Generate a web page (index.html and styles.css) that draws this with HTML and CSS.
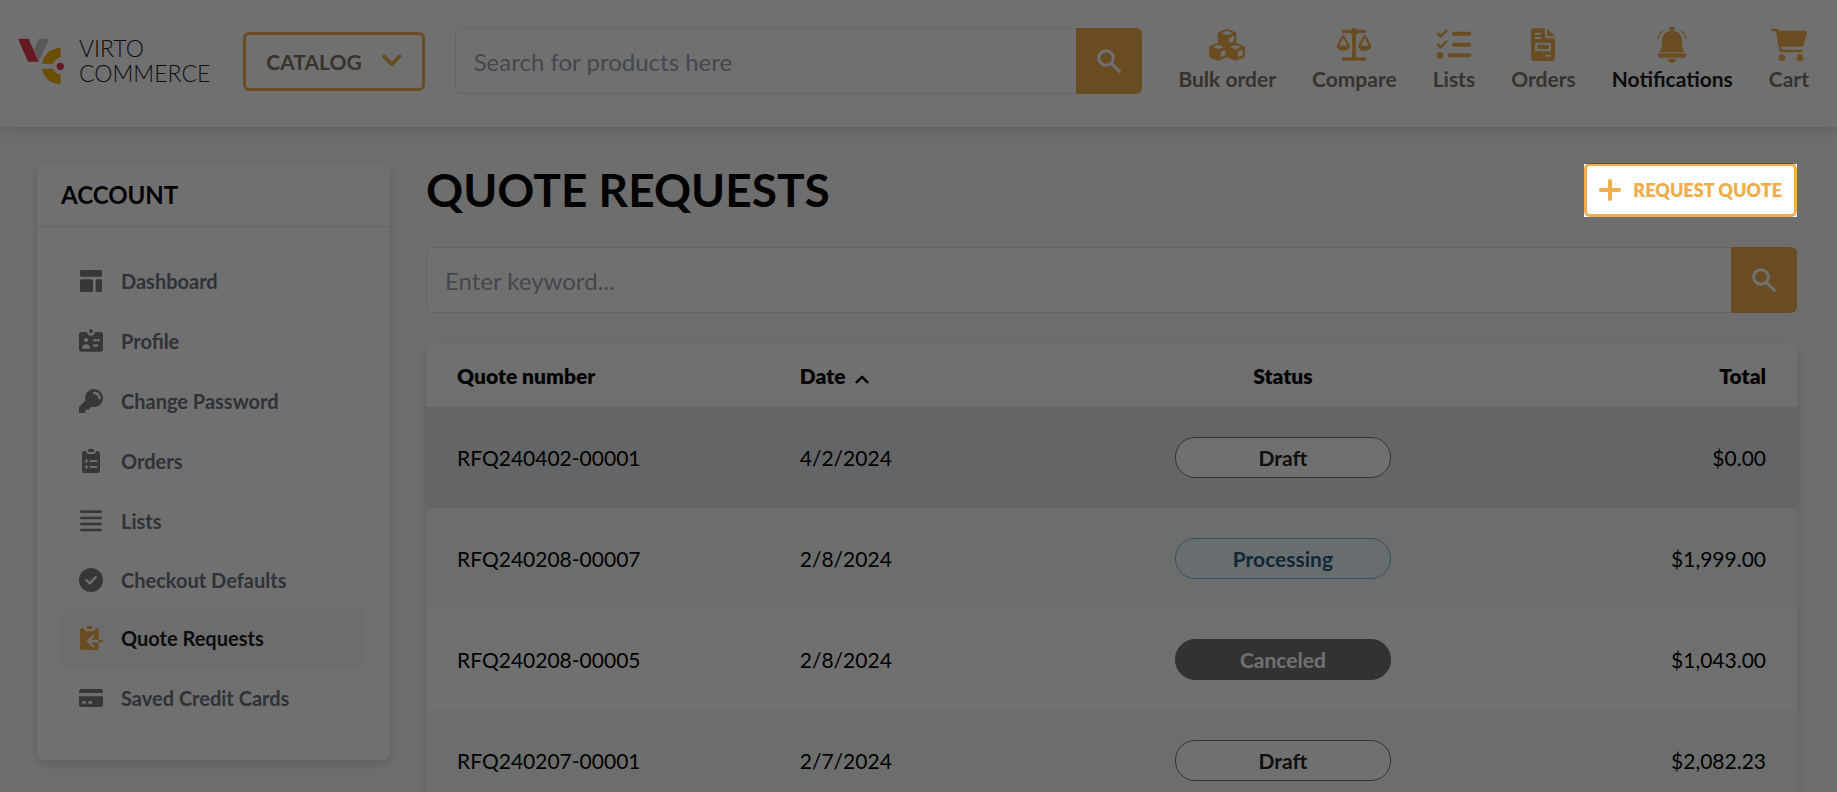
FILE: index.html
```html
<!DOCTYPE html>
<html lang="en">
<head>
<meta charset="utf-8">
<title>Quote requests</title>
<link rel="stylesheet" href="styles.css">
</head>
<body>
<header class="header">
  <a class="logo" href="#">
    <svg class="logo-mark" viewBox="54 112 138 141" aria-hidden="true">
      <path fill="#c9c9c9" d="M117 114h30l-30 67-15-34z"/>
      <path fill="#e5394a" d="M54 114h32l30 69H84z"/>
      <path fill="#efb400" d="M182 141v29q-16 4-23 19h-33q8-43 56-48zM126 204h33q7 15 23 18v29q-48-5-56-47z"/>
      <circle fill="#e5394a" cx="181" cy="197" r="11"/>
    </svg>
    <span class="logo-text">VIRTO<br>COMMERCE</span>
  </a>
  <button class="catalog" type="button">CATALOG
    <svg class="chevron" viewBox="1148 162 60 42" aria-hidden="true"><path d="M1154 169l24 24 23-24"/></svg>
  </button>
  <form class="search search--header">
    <input class="search-input" type="text" placeholder="Search for products here" aria-label="Search for products">
    <button class="search-button" type="button" aria-label="Search">
      <svg class="icon-search" viewBox="180 147 72 72"><circle cx="207" cy="174" r="22"/><path d="M224 191l23 23"/></svg>
    </button>
  </form>
  <nav class="tools">
    <a class="tool" href="#">
      <svg class="tool-icon" viewBox="513 79 108 108" aria-hidden="true">
        <defs><path id="cube" fill-rule="evenodd" d="M563 86q4-2 8 0l20 8q4 2 4 6v22q0 5-4 7l-20 8q-4 2-8 0l-20-8q-4-2-4-7v-22q0-4 4-6zM567 91l-17 6 17 7 17-7zM574 111v17l14-6v-17z"/></defs>
        <use href="#cube"/><use href="#cube" x="-26" y="42"/><use href="#cube" x="26" y="42"/>
      </svg>
      Bulk order</a>
    <a class="tool" href="#">
      <svg class="tool-icon" viewBox="891 79 108 108" aria-hidden="true">
        <rect x="909" y="87" width="72" height="10" rx="2"/><circle cx="945" cy="93" r="11"/>
        <rect x="939" y="95" width="12" height="80"/><rect x="909" y="170" width="72" height="10" rx="3"/>
        <path fill-rule="evenodd" d="M909 105q4-5 8 0l16 30q-2 15-20 15t-20-15zM913 112l-12 23h24zM973 105q4-5 8 0l16 30q-2 15-20 15t-20-15zM977 112l-12 23h24z"/>
      </svg>
      Compare</a>
    <a class="tool" href="#">
      <svg class="tool-icon" viewBox="48 79 108 108" aria-hidden="true">
        <path class="line line--thick" d="M54 99l8 8 17-17M54 132l8 8 17-17"/><circle cx="60" cy="164" r="10"/>
        <rect x="96" y="93" width="58" height="12" rx="6"/><rect x="96" y="126" width="58" height="12" rx="6"/><rect x="83" y="158" width="71" height="12" rx="6"/>
      </svg>
      Lists</a>
    <a class="tool" href="#">
      <svg class="tool-icon" viewBox="318 79 108 108" aria-hidden="true">
        <path fill-rule="evenodd" d="M344 83h34v24q0 6 6 6h24v59q0 9-9 9h-54q-9 0-9-9V91q0-8 8-8zM348 96v6h18v-6zM348 109v6h18v-6zM348 126v26h48v-26zM355 132h34v13h-34zM378 162v6h18v-6z"/><path d="M384 83v24h24z"/>
      </svg>
      Orders</a>
    <a class="tool tool--active" href="#">
      <svg class="tool-icon" viewBox="702 79 108 108" aria-hidden="true">
        <rect x="747" y="79" width="18" height="11" rx="5"/>
        <path d="M756 91c-21 0-30 14-30 31 0 19-3 27-8 33h76c-5-6-8-14-8-33 0-17-9-31-30-31zM743 174h26q-3 12-13 12t-13-12z"/>
        <rect x="714" y="158" width="84" height="13" rx="6"/>
        <path class="line" d="M727 92q-11 8-13 21M785 92q11 8 13 21"/>
      </svg>
      Notifications</a>
    <a class="tool" href="#">
      <svg class="tool-icon" viewBox="1053 79 108 108" aria-hidden="true">
        <path class="line line--thick" d="M1057 88h14l11 63h63"/>
        <path d="M1072 90h84q6 1 5 7l-10 36q-1 5-7 5h-63z"/>
        <circle cx="1086" cy="171" r="10"/><circle cx="1140" cy="171" r="10"/>
      </svg>
      Cart</a>
  </nav>
</header>

<div class="page">
  <aside class="account">
    <h2 class="account-title">ACCOUNT</h2>
    <nav class="menu">
      <a class="menu-link" href="#">
        <svg class="menu-icon" viewBox="177 360 72 72" aria-hidden="true"><rect x="180" y="363" width="66" height="20" rx="4"/><rect x="180" y="391" width="39" height="38" rx="5"/><rect x="227" y="391" width="19" height="38" rx="4"/></svg>
        Dashboard</a>
      <a class="menu-link" href="#">
        <svg class="menu-icon" viewBox="177 540 72 72" aria-hidden="true"><path fill-rule="evenodd" d="M185 549h16q1 11 12 11t12-11h16q8 0 8 8v43q0 8-8 8h-56q-8 0-8-8v-43q0-8 8-8zM198 567a6 6 0 1 0 .1 0zM186 599h24q-1-13-12-13t-12 13zM220 571v6h19v-6zM220 586v7h14v-7z"/><rect x="208" y="540" width="10" height="13" rx="5"/></svg>
        Profile</a>
      <a class="menu-link" href="#">
        <svg class="menu-icon" viewBox="177 720 72 72" aria-hidden="true"><path d="M196 740a27 27 0 1 1 18 33l-9 9h-9v10h-19v-18l20-20q-3-7-1-14z"/><path class="cut" d="M222 732q15 1 17 16"/></svg>
        Change Password</a>
      <a class="menu-link" href="#">
        <svg class="menu-icon" viewBox="177 900 72 72" aria-hidden="true"><path fill-rule="evenodd" d="M193 906h5q1 9 8 9h14q7 0 8-9h5q7 0 7 7v52q0 7-7 7h-40q-7 0-7-7v-52q0-7 7-7zM195 932v8h8v-8zM209 933v6h22v-6zM195 950v8h8v-8zM209 951v6h22v-6z"/><rect x="204" y="900" width="18" height="9" rx="4"/></svg>
        Orders</a>
      <a class="menu-link" href="#">
        <svg class="menu-icon" viewBox="177 150 72 72" aria-hidden="true"><path class="line line--thick" d="M184 158h58M184 177h58M184 195h58M184 213h58"/></svg>
        Lists</a>
      <a class="menu-link menu-link--compact" href="#">
        <svg class="menu-icon" viewBox="177 321 72 72" aria-hidden="true"><circle cx="213" cy="357" r="36"/><path class="cut" d="M199 357l10 10 18-18"/></svg>
        Checkout Defaults</a>
      <a class="menu-link menu-link--active" href="#">
        <svg class="menu-icon" viewBox="177 501 72 72" aria-hidden="true"><path d="M187 507h4q1 10 9 10h17q8 0 9-10h4q6 0 6 7v52q0 7-7 7h-42q-7 0-7-7v-52q0-7 7-7z"/><rect x="200" y="501" width="17" height="9" rx="4"/><path class="cut" d="M236 546h-30M219 531l-15 15 15 15"/><path class="line line--thick" d="M239 546h6"/></svg>
        Quote Requests</a>
      <a class="menu-link" href="#">
        <svg class="menu-icon" viewBox="177 681 72 72" aria-hidden="true"><path fill-rule="evenodd" d="M185 690h56q8 0 8 8v4h-72v-4q0-8 8-8zM177 712h72v24q0 8-8 8h-56q-8 0-8-8zM187 726v8h11v-8zM205 726v8h11v-8z"/></svg>
        Saved Credit Cards</a>
    </nav>
  </aside>

  <main class="content">
    <div class="title-row">
      <h1 class="title">QUOTE REQUESTS</h1>
      <div class="spotlight">
        <button class="request" type="button">
          <svg class="plus" viewBox="0 0 22 22" aria-hidden="true"><path d="M11 2v18M2 11h18"/></svg>
          REQUEST QUOTE</button>
      </div>
    </div>
    <form class="search">
      <input class="search-input" type="text" placeholder="Enter keyword..." aria-label="Keyword">
      <button class="search-button" type="button" aria-label="Search">
        <svg class="icon-search" viewBox="180 147 72 72"><circle cx="207" cy="174" r="22"/><path d="M224 191l23 23"/></svg>
      </button>
    </form>
    <table class="quotes">
      <thead>
        <tr><th>Quote number</th><th>Date <svg class="sort" viewBox="0 0 16 10" aria-hidden="true"><path d="M2 8l6-6 6 6"/></svg></th><th class="center">Status</th><th class="right">Total</th></tr>
      </thead>
      <tbody>
        <tr class="hovered"><td>RFQ240402-00001</td><td>4/2/2024</td><td class="center"><span class="pill">Draft</span></td><td class="right">$0.00</td></tr>
        <tr class="tinted"><td>RFQ240208-00007</td><td>2/8/2024</td><td class="center"><span class="pill pill--processing">Processing</span></td><td class="right">$1,999.00</td></tr>
        <tr><td>RFQ240208-00005</td><td>2/8/2024</td><td class="center"><span class="pill pill--canceled">Canceled</span></td><td class="right">$1,043.00</td></tr>
        <tr class="tinted"><td>RFQ240207-00001</td><td>2/7/2024</td><td class="center"><span class="pill">Draft</span></td><td class="right">$2,082.23</td></tr>
      </tbody>
    </table>
  </main>
</div>
</body>
</html>
```

FILE: styles.css
```css
:root {
  --accent: #f0ad4e;
  --line: #e5e7eb;
  --muted: #6b7280;
}

* { box-sizing: border-box; }

body {
  margin: 0;
  height: 100vh;
  overflow: hidden;
  background: #fafafa;
  color: #000;
  font-family: Lato, "Open Sans", sans-serif;
  font-size: 21px;
}

a { color: inherit; text-decoration: none; }
button, input { font: inherit; }
svg { display: block; flex: none; }

/* Header */
.header {
  position: relative;
  display: flex;
  align-items: center;
  gap: 30px;
  padding: 27px 28px 32px 18px;
  background: #fff;
  box-shadow: 0 2px 14px rgba(0, 0, 0, 0.16);
}

.logo { display: flex; align-items: center; gap: 15px; padding-right: 3px; }
.logo-mark { width: 46px; height: 47px; }
.logo-text {
  color: #1f2430;
  font-size: 23px;
  font-weight: 300;
  line-height: 25px;
}

.catalog {
  display: flex;
  align-items: center;
  gap: 20px;
  height: 59px;
  padding: 0 20px;
  border: 3px solid var(--accent);
  border-radius: 6px;
  background: #fff;
  color: #7f7469;
  font-weight: 700;
}
.chevron {
  width: 20px;
  height: 14px;
  fill: none;
  stroke: var(--accent);
  stroke-width: 11;
  stroke-linecap: round;
  stroke-linejoin: round;
}

.search { display: flex; }
.search--header { flex: 1; }
.search-input {
  flex: 1;
  min-width: 0;
  height: 66px;
  padding: 0 18px;
  border: 1px solid var(--line);
  border-right: 0;
  border-radius: 6px 0 0 6px;
  background: #fff;
  font-size: 24px;
}
.search-input::placeholder { color: #9ca3af; opacity: 1; }
.search-button {
  display: flex;
  align-items: center;
  justify-content: center;
  width: 66px;
  height: 66px;
  border: 0;
  border-radius: 0 6px 6px 0;
  background: var(--accent);
}
.icon-search {
  width: 24px;
  height: 24px;
  fill: none;
  stroke: #fff;
  stroke-width: 9;
  stroke-linecap: round;
}

.tools { display: flex; gap: 36px; padding-left: 6px; }
.tool {
  display: flex;
  flex-direction: column;
  align-items: center;
  color: #7f7469;
  font-weight: 700;
  line-height: 32px;
}
.tool--active { color: #1b1d24; }
.tool-icon { width: 36px; height: 36px; fill: var(--accent); color: var(--accent); }

.line {
  fill: none;
  stroke: currentColor;
  stroke-width: 4;
  stroke-linecap: round;
  stroke-linejoin: round;
}
.line--thick { stroke-width: 8; }
.cut {
  fill: none;
  stroke: #fff;
  stroke-width: 7;
  stroke-linecap: round;
  stroke-linejoin: round;
}

/* Page */
.page {
  display: flex;
  align-items: flex-start;
  gap: 36px;
  padding: 36px 40px 36px 37px;
}

.account {
  flex: none;
  width: 353px;
  border-radius: 6px;
  background: #fff;
  box-shadow: 0 4px 10px rgba(0, 0, 0, 0.14);
}
.account-title {
  margin: 0;
  padding: 0 24px;
  border-bottom: 1px solid var(--line);
  font-size: 24px;
  font-weight: 700;
  line-height: 63px;
}
.menu { padding: 24px 24px 32px; }
.menu-link {
  display: flex;
  align-items: center;
  gap: 18px;
  height: 60px;
  padding: 0 18px;
  border-radius: 6px;
  color: var(--muted);
  font-size: 20px;
  font-weight: 700;
}
.menu-link--compact { height: 57px; }
.menu-link--active { background: #f9f9f9; color: #1b1d24; }
.menu-icon { width: 24px; height: 24px; fill: #7d7d7d; color: #7d7d7d; }
.menu-link--active .menu-icon { fill: var(--accent); color: var(--accent); }

.content { flex: 1; min-width: 0; }
.title-row {
  display: flex;
  align-items: center;
  justify-content: space-between;
  margin-bottom: 30px;
}
.title { margin: 0; font-size: 46px; font-weight: 700; line-height: 54px; }

/* The guided tour dims everything around this button */
.spotlight { position: relative; z-index: 10; background: #fff; }
.spotlight::after {
  content: "";
  position: absolute;
  inset: 1px 0 0;
  box-shadow: 0 0 0 4000px rgba(0, 0, 0, 0.56);
  pointer-events: none;
}
.request {
  display: flex;
  align-items: center;
  gap: 12px;
  height: 54px;
  padding: 0 12px;
  border: 3px solid var(--accent);
  border-radius: 6px;
  background: #fff;
  color: var(--accent);
  font-size: 18px;
  font-weight: 800;
}
.plus {
  width: 22px;
  height: 22px;
  fill: none;
  stroke: currentColor;
  stroke-width: 4;
  stroke-linecap: round;
}

/* Quotes */
.quotes {
  width: 100%;
  margin-top: 31px;
  border-collapse: collapse;
  table-layout: fixed;
  border-radius: 6px;
  background: #fff;
  box-shadow: 0 4px 10px rgba(0, 0, 0, 0.14);
}
th, td { padding: 0 31px; text-align: left; }
th { height: 63px; font-weight: 800; }
td { height: 101px; }
.center { text-align: center; }
.right { text-align: right; }
.hovered { background: #e4e7eb; }
.tinted { background: #f6fbf9; }
.sort {
  display: inline-block;
  width: 14px;
  height: 9px;
  margin-left: 5px;
  fill: none;
  stroke: #000;
  stroke-width: 3;
  stroke-linecap: round;
  stroke-linejoin: round;
}
.pill {
  display: inline-block;
  width: 216px;
  border: 1px solid #737373;
  border-radius: 20px;
  background: #fff;
  color: #262626;
  font-weight: 700;
  line-height: 39px;
}
.pill--processing { border-color: #7abcd8; background: #ecf8ff; color: #295a7c; }
.pill--canceled { background: #737373; color: #fff; }
```
